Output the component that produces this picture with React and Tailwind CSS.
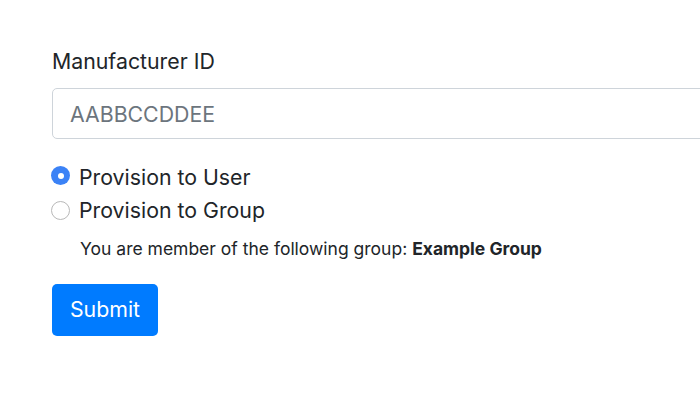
import React, { useState } from 'react';

function Radio({ checked, label, onChange }) {
  return (
    <label className="flex items-center h-[33px] cursor-pointer">
      <span
        className={`-ml-[1px] w-[19px] h-[19px] rounded-full flex items-center justify-center shrink-0 ${
          checked ? 'bg-[#3b82f6] -translate-y-[2px]' : 'bg-white border border-[#b8b8b8]'
        }`}
        onClick={onChange}
      >
        {checked && <span className="w-[6px] h-[6px] rounded-full bg-white" />}
      </span>
      <span className="ml-[9px] text-[21.3px] text-[#212529]">{label}</span>
    </label>
  );
}

export default function App() {
  const [target, setTarget] = useState('user');

  return (
    <div className="w-[700px] h-[400px] overflow-hidden bg-white" style={{ fontFamily: 'Inter, "Liberation Sans", sans-serif' }}>
      <div className="pl-[52px] pt-[45px]">
        <label className="block text-[21.3px] leading-[32px] text-[#212529] mb-[11px]">Manufacturer ID</label>
        <input
          className="block w-[700px] h-[51px] border border-[#ced4da] rounded-[5px] px-[17px] text-[21.3px] text-[#495057] placeholder:text-[#6c757d] outline-none"
          placeholder="AABBCCDDEE"
        />

        <div className="mt-[22px]">
          <Radio checked={target === 'user'} label="Provision to User" onChange={() => setTarget('user')} />
          <Radio checked={target === 'group'} label="Provision to Group" onChange={() => setTarget('group')} />
          <p className="ml-[28px] mt-[9px] text-[17.5px] leading-[26px] text-[#212529]">
            You are member of the following group: <b className="font-bold">Example Group</b>
          </p>
        </div>

        <button className="mt-[22px] w-[106px] h-[52px] rounded-[5px] bg-[#007bff] text-white text-[21.3px]">
          Submit
        </button>
      </div>
    </div>
  );
}
